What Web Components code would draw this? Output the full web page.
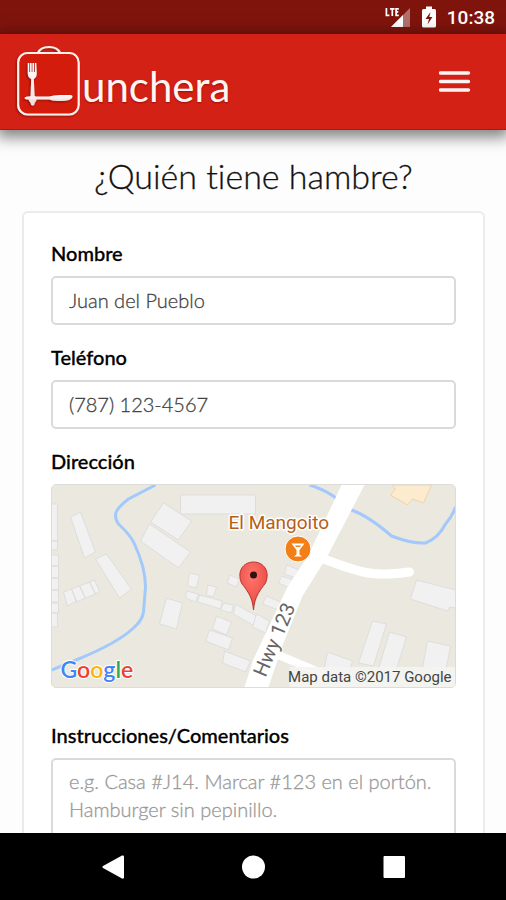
<!DOCTYPE html>
<html lang="es">
<head>
<meta charset="utf-8">
<meta name="viewport" content="width=device-width, initial-scale=1">
<title>Lunchera</title>
<style>
  body { margin: 0; font-family: Lato, "Open Sans", sans-serif; font-variant-ligatures: none; background: #fdfdfd; color: #111; }
</style>
</head>
<body>
<lunch-app></lunch-app>
<script>
const define = (name, html, setup) => {
  const template = document.createElement('template');
  template.innerHTML = '<style>*{box-sizing:border-box}</style>' + html;
  customElements.define(name, class extends HTMLElement {
    constructor() {
      super();
      this.attachShadow({ mode: 'open' }).append(template.content.cloneNode(true));
      if (setup) setup(this, this.shadowRoot);
    }
  });
};

define('status-bar', `
<style>
  :host { display: flex; align-items: center; justify-content: flex-end; height: 34px; padding: 0 11px; background: #7f140c; color: #fff; flex: none; }
  time { font: 500 19px/24px Roboto, sans-serif; padding-top: 2px; }
  .signal { margin-right: 11px; }
  .battery { margin-right: 11px; }
</style>
<svg class="signal" width="26" height="24" viewBox="0 0 26 24" role="img" aria-label="LTE">
  <path d="M6 22 25 3v19z" fill="#b0706c"/>
  <path d="M6 22 18 10v12z" fill="#fff"/>
  <path d="M1.400 3v7.300h3M5 3.800h4.600M7.300 3.800v7.300M13.800 3.800h-2.700v6.500h2.700M11 6.900h2.300" fill="none" stroke="#fff" stroke-width="1.700"/>
</svg>
<svg class="battery" width="14" height="24" viewBox="0 0 14 24" role="img" aria-label="Batería cargando">
  <path d="M4 1.500h6V4h2.500q1.500 0 1.500 1.500V21q0 1.500-1.500 1.500h-11Q0 22.500 0 21V5.500Q0 4 1.500 4H4z" fill="#fff"/>
  <path d="M8.500 7 3.500 14H7l-1.500 5.500L10.500 12H7.300z" fill="#7f140c"/>
</svg>
<time datetime="10:38">10:38</time>
`);

define('brand-logo', `
<style>
  :host { display: block; }
  a { display: flex; align-items: flex-start; color: #fff5f2; text-decoration: none; }
  svg { display: block; flex: none; }
  span { font-size: 42px; line-height: 48px; padding-top: 18px; font-weight: 400; text-shadow: 0 1px 2px #a00c04; }
</style>
<a href="#" aria-label="Lunchera">
<svg width="67" height="74" viewBox="0 0 67 74" aria-hidden="true">
  <defs>
    <linearGradient id="metal" x1="0" y1="0" x2="0" y2="1"><stop offset="0" stop-color="#fff"/><stop offset="1" stop-color="#f2dcd9"/></linearGradient>
    <filter id="shade" x="-30%" y="-30%" width="160%" height="160%"><feDropShadow dx="-1" dy="1" stdDeviation="1" flood-color="#6d0c05" flood-opacity=".75"/></filter>
  </defs>
  <g filter="url(#shade)">
    <path d="M23 9C26 1 42 1 45 9" fill="none" stroke="#fff0ec" stroke-width="2.200"/>
    <rect x="3.200" y="9" width="60.500" height="61.500" rx="9.500" fill="#d41a09" stroke="#fff0ec" stroke-width="2.200"/>
  </g>
  <g fill="url(#metal)" filter="url(#shade)">
    <path d="M12.800 19h1.400v9h.9v-9h1.500v9h.9v-9h1.500v9h.9v-9h1.400l.5 10.500q0 4-3 5.500l.9 17q2.200 1 1.900 3.300-.3 2.700-1.600 3.200-.3 3-2.300 3.200-2-.2-2.300-3.200-1.500-.5-1.800-3.200-.3-2.300 2-3.300l.6-17q-3.400-1.500-3.400-5.500z"/>
    <path d="M12 52.500h22q4.500-1.500 11-1.500h11q2 .5 1.500 2-1.500 4-11 4-8 0-12.500-1.500L12 55.500q-2.500-.5-2.500-1.500t2.500-1.500z"/>
  </g>
</svg>
<span>unchera</span>
</a>
`);

define('app-header', `
<style>
  :host { display: flex; align-items: center; justify-content: space-between; height: 96px; padding: 0 31px 2px 15px; background: #d42116; border-bottom: 1px solid #c90d05; box-shadow: 0 4px 14px 3px rgba(0,0,0,.5); flex: none; position: relative; z-index: 1; }
  button { display: block; width: 40px; height: 40px; padding: 4px; border: 0; background: none; color: #fff; }
  svg { display: block; }
</style>
<brand-logo></brand-logo>
<button type="button" aria-label="Menú"><svg width="32" height="32" viewBox="0 0 32 32" stroke="#fff4f2" stroke-width="3.400" stroke-linecap="round"><path d="M1.500 8h28M1.500 16.500h28M1.500 25h28"/></svg></button>
`);

define('text-field', `
<style>
  :host { display: block; }
  label { display: block; font-size: 20px; line-height: 20px; font-weight: 500; color: #000; -webkit-text-stroke: 0.3px #000; margin-bottom: 13px; }
  input, textarea { display: block; width: 100%; margin: 0; border: 2px solid #dadada; border-radius: 5px; background: #fff; color: #444; font: 300 20px/28px Lato, sans-serif; -webkit-text-stroke: 0.3px currentColor; padding: 7px 16px 9px; outline: 0; }
  input { height: 49px; }
  textarea { height: 180px; resize: none; }
  ::placeholder { color: #999; opacity: 1; }
</style>
<label for="control"></label>
`, (host, root) => {
  const multi = host.hasAttribute('multiline');
  const control = document.createElement(multi ? 'textarea' : 'input');
  control.id = 'control';
  control.placeholder = host.getAttribute('placeholder') || '';
  control.value = host.getAttribute('value') || '';
  if (!multi) control.type = host.getAttribute('type') || 'text';
  root.querySelector('label').textContent = host.getAttribute('label');
  root.append(control);
});

define('address-map', `
<style>
  :host { display: block; }
  h2 { margin: 0 0 13px; font-size: 20px; line-height: 20px; font-weight: 500; color: #000; -webkit-text-stroke: 0.3px #000; }
  .map { border: 1px solid #dcdcd8; border-radius: 5px; overflow: hidden; height: 204px; background: #ebe9df; }
  svg { display: block; width: 100%; height: 100%; }
  text { font-family: Roboto, sans-serif; }
</style>
<h2>Dirección</h2>
<div class="map">
<svg viewBox="0 0 404 202" preserveAspectRatio="xMidYMid slice" role="group" aria-label="Mapa de la dirección">
  <defs>
    <radialGradient id="pin" cx=".45" cy=".3" r=".7"><stop offset="0" stop-color="#ff776e"/><stop offset="1" stop-color="#e9453d"/></radialGradient>
  </defs>
  <rect width="404" height="202" fill="#ebe9df"/>
  <g fill="#f1f1f1" stroke="#dedddb" stroke-width="1">
    <path d="M0 19h6v37H0zM0 56h6v9H0zM0 70h7v11H0zM0 81h7v12H0zM0 93h7v12H0zM0 105h7v12H0zM0 118h7v10H0zM0 128h6v14H0z"/>
    <path d="M19 32 29 27 44 67 33 73zM44 74 55 69 80 104 68 113zM12 107 20 104 25 116 16 121zM20 104 28 101 34 113 25 117zM28 101 38 97 44 109 34 113zM38 97 43 95 48 106 44 109z"/>
    <path d="M112 18 140 36 127 55 99 37zM98 39 139 67 127 83 89 56zM129 10H204V29H129z"/>
    <path d="M138 88 148 90 145 103 136 101zM156 100 165 102 162 112 155 110zM178 90 188 94 185 102 176 98zM135 106 147 109 144 117 134 113zM148 110 171 116 169 124 146 117zM172 118 182 120 180 128 169 125zM184 119 205 131 203 141 182 129z"/>
    <path d="M115 113 131 118 125 144 108 139zM165 131 180 137 175 150 161 144zM158 145 181 153 177 165 154 156zM173 166 199 176 194 187 171 178z"/>
    <path d="M235 80 248 85 244 93 233 89zM230 91 242 95 238 103 227 98zM215 111 229 117 227 125 211 119zM205 129 218 136 214 148 201 142z"/>
    <path d="M365 95 404 105V123L398 122 396 126 359 114zM321 136 335 139 322 181 307 178zM338 147 355 152 344 187 327 184zM376 156 399 161 394 187 371 182zM276 167 301 176 296 193 272 187z"/>
  </g>
  <path d="M340 0 344 4 339 10 356 20 361 14 372 18 380 0z" fill="#fdebcf" stroke="#f0d2a4"/>
  <g fill="none" stroke="#a3c8fb" stroke-width="3">
    <path d="M104 0 77 14Q64 24 64 30 64 35 67 39 79 50 83 59 94 83 94 102L92 127Q91 135 82 143 66 158 27 174L0 185"/>
    <path d="M258 0Q275 5 287 15L300 25Q317 31 340 51 361 59 374 58 387 53 394 39 401 31 404 22"/>
  </g>
  <g fill="none" stroke="#fff" stroke-width="9" stroke-linecap="round">
    <path d="M270 73Q295 83 312 87T358 87"/>
    <path d="M222 168 272 189" stroke-width="8"/>
  </g>
  <path d="M290 0H313L276 71 251 111 230 163 217 202H193L202 174 236 102 257 70z" fill="#fff"/>
  <text x="177" y="44" font-size="19" fill="#b65e19" stroke="#fff" stroke-width="3" stroke-linejoin="round" paint-order="stroke">El Mangoito</text>
  <circle cx="246.500" cy="64" r="13" fill="#f57f17" stroke="#fff" stroke-width="1"/>
  <path d="M240 58.500H253L248 65V69.500L250.500 71.500H242.500L245 69.500V65z" fill="#fff"/><path d="M243.500 60.500H249.500L248.500 62H244.500z" fill="#f57f17"/>
  <text transform="translate(214 193) rotate(-67)" font-size="20" fill="#666" stroke="#fff" stroke-width="2" paint-order="stroke">Hwy 123</text>
  <path d="M202 125C201 111 195 105 190 98 185 86 192 77 202 77 212 77 219 86 214 98 209 105 203 111 202 125z" fill="url(#pin)" stroke="#b8352f" stroke-width="1"/>
  <circle cx="202" cy="90" r="3.500" fill="#35100e"/>
  <text x="9" y="193" font-size="23" font-weight="600" style="font-family:Lato,sans-serif" stroke="#fff" stroke-width="2" stroke-linejoin="round" paint-order="stroke"><tspan fill="#4285f4">G</tspan><tspan fill="#ea4335">o</tspan><tspan fill="#fbb605">o</tspan><tspan fill="#4285f4">g</tspan><tspan fill="#34a853">l</tspan><tspan fill="#ea4335">e</tspan></text>
  <rect x="238" y="182" width="166" height="20" fill="#f5f5f2" fill-opacity=".85"/>
  <text x="400" y="197" text-anchor="end" font-size="15" fill="#444">Map data ©2017 Google</text>
</svg>
</div>
`);

define('form-card', `
<style>
  :host { display: block; }
  form { display: flex; flex-direction: column; gap: 22px; margin: 0; padding: 30px 27px; border: 2px solid #ebebeb; border-radius: 6px; background: #fff; }
</style>
<form><slot></slot></form>
`);

define('nav-bar', `
<style>
  :host { display: flex; align-items: center; justify-content: center; gap: 100px; height: 67px; background: #000; flex: none; }
  button { display: block; width: 40px; height: 40px; padding: 8px; border: 0; background: none; }
  svg { display: block; fill: #fff; }
</style>
<button type="button" aria-label="Atrás"><svg width="24" height="24" viewBox="0 0 24 24"><path d="M2 11 21 .5Q23 0 23 1.500V22.500Q23 24 21 23.500L2 13Q.5 12 2 11z"/></svg></button>
<button type="button" aria-label="Inicio"><svg width="24" height="24" viewBox="0 0 24 24"><circle cx="12.500" cy="12" r="11.500"/></svg></button>
<button type="button" aria-label="Recientes"><svg width="24" height="24" viewBox="0 0 24 24"><rect x="2.500" y="1" width="21.500" height="22" rx="1"/></svg></button>
`);

define('lunch-app', `
<style>
  :host { display: flex; flex-direction: column; height: 100vh; overflow: hidden; }
  main { flex: 1; min-height: 0; overflow: hidden; padding: 24px 21px 0 22px; }
  h1 { margin: 0 0 13px; font-size: 34px; line-height: 44px; font-weight: 300; text-align: center; color: #111; -webkit-text-stroke: 0.3px currentColor; }
  address-map { margin-bottom: 15px; }
</style>
<status-bar></status-bar>
<app-header></app-header>
<main>
  <h1>¿Quién tiene hambre?</h1>
  <form-card>
    <text-field label="Nombre" value="Juan del Pueblo"></text-field>
    <text-field label="Teléfono" type="tel" value="(787) 123-4567"></text-field>
    <address-map></address-map>
    <text-field label="Instrucciones/Comentarios" multiline placeholder="e.g. Casa #J14. Marcar #123 en el portón. Hamburger sin pepinillo."></text-field>
  </form-card>
</main>
<nav-bar></nav-bar>
`);
</script>
</body>
</html>
